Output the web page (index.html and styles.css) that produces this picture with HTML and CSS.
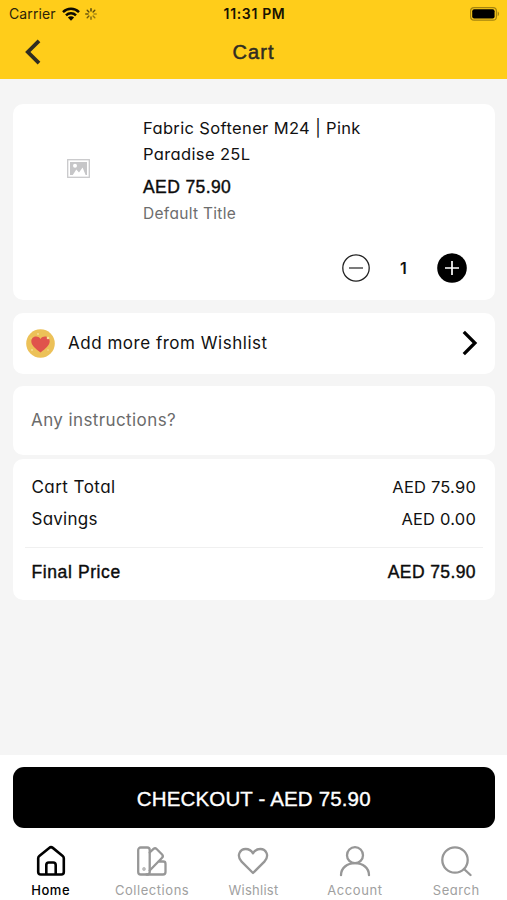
FILE: index.html
```html
<!DOCTYPE html>
<html lang="en">
<head>
<meta charset="utf-8">
<meta name="viewport" content="width=device-width, initial-scale=1">
<title>Cart</title>
<link rel="stylesheet" href="styles.css">
</head>
<body>
<div class="app">
  <header class="top">
    <div class="status">
      <div class="status-left">
        <span class="carrier">Carrier</span>
        <svg class="wifi" width="18" height="14" viewBox="0 0 18 14"><g fill="none" stroke="#0d0b02" stroke-width="2.5"><path d="M1 5.1a11.4 11.4 0 0 1 16 0"/><path d="M4 8.3a7.1 7.1 0 0 1 10 0"/></g><path d="M9 13.7 5.9 10.6a4.4 4.4 0 0 1 6.2 0z" fill="#0d0b02"/></svg>
        <svg class="spinner" width="12" height="12" viewBox="0 0 12 12" stroke="#4a3d0c" stroke-width="1.4" stroke-linecap="round"><path d="M6 .7v2.4"/><path d="M9.8 2.2 8.1 3.9" opacity=".9"/><path d="M11.3 6H8.9" opacity=".45"/><path d="M9.8 9.8 8.1 8.1" opacity=".6"/><path d="M6 11.3V8.9" opacity=".7"/><path d="M2.2 9.8l1.7-1.7" opacity=".8"/><path d="M.7 6h2.4" opacity=".8"/><path d="M2.2 2.2l1.7 1.7" opacity=".9"/></svg>
      </div>
      <span class="clock">11:31 PM</span>
      <div class="status-right">
        <svg width="30" height="14" viewBox="0 0 30 14"><rect x=".6" y=".6" width="25.8" height="12.6" rx="3.5" fill="none" stroke="#a5840f" stroke-width="1.2"/><rect x="2.2" y="2.2" width="22.4" height="9.4" rx="2" fill="#000"/><path d="M27.7 4.6v4.6c1.8-.7 1.8-3.9 0-4.6z" fill="#a5840f"/></svg>
      </div>
    </div>
    <div class="titlebar">
      <svg class="back" width="16" height="26" viewBox="0 0 16 26"><path d="M14 1.8 2.8 13 14 24.2" fill="none" stroke="#302d22" stroke-width="3.8"/></svg>
      <h1>Cart</h1>
    </div>
  </header>

  <main>
    <section class="card product">
      <div class="thumb">
        <svg width="23" height="19" viewBox="0 0 23 19"><rect x=".7" y=".7" width="21.6" height="17.6" fill="#fff" stroke="#c9c9cb" stroke-width="1.3"/><path d="M3 3h17v13H3z" fill="#c6c6c8"/><path d="M5.800 16 9.300 10.500 12 13.400 15.600 8.500 18.600 16z" fill="#fff"/><circle cx="8" cy="6.700" r="2" fill="#fff"/></svg>
      </div>
      <div class="details">
        <p class="geo name">Fabric Softener M24 | Pink<br>Paradise 25L</p>
        <p class="strong price">AED 75.90</p>
        <p class="geo variant">Default Title</p>
        <div class="stepper">
          <svg width="30" height="30" viewBox="0 0 30 30"><circle cx="15" cy="15" r="13.200" fill="#fff" stroke="#222" stroke-width="1.300"/><path d="M8 15h14" stroke="#333" stroke-width="1.300"/></svg>
          <span class="qty">1</span>
          <svg width="30" height="30" viewBox="0 0 30 30"><circle cx="15" cy="15" r="14.800"/><path d="M8 15h14M15 8v14" stroke="#fff" stroke-width="1.700"/></svg>
        </div>
      </div>
    </section>

    <section class="card wishlist">
      <svg width="29" height="29" viewBox="0 0 29 29"><circle cx="14.500" cy="14.500" r="14.300" fill="#ecc158"/><path d="M14.500 23.600C9.500 19.500 5.300 16.500 5.300 12.300c0-5.200 6.500-6.500 9.200-2.400 2.700-4.100 9.200-2.800 9.200 2.400 0 4.200-4.200 7.200-9.200 11.300z" fill="#e0534c"/><g fill="#f7df98"><circle cx="12" cy="5" r=".9"/><circle cx="22" cy="9" r="1.300"/><circle cx="6" cy="21" r=".9"/><circle cx="22" cy="21" r=".8"/><circle cx="5" cy="9" r=".6"/></g></svg>
      <span class="geo wish-text">Add more from Wishlist</span>
      <svg class="next" width="16" height="26" viewBox="0 0 16 26"><path d="M1.800 1.900 12.900 13 1.800 24.100" fill="none" stroke="#000" stroke-width="3.300"/></svg>
    </section>

    <section class="card note"><span class="geo note-text">Any instructions?</span></section>

    <section class="card totals">
      <div class="row"><span class="geo t-cart">Cart Total</span><span class="geo amount">AED 75.90</span></div>
      <div class="row"><span class="geo t-save">Savings</span><span class="geo amount">AED 0.00</span></div>
      <div class="row final"><span class="strong final-label">Final Price</span><span class="strong final-amount">AED 75.90</span></div>
    </section>
  </main>

  <footer>
    <div class="checkout"><span>CHECKOUT - AED 75.90</span></div>
    <nav>
      <div class="tab active">
        <svg viewBox="0 0 32 32"><path d="M3.200 13.200Q3.200 11.800 4.300 10.900L14.200 2.900q1.800-1.400 3.600 0l9.900 8q1.100.9 1.100 2.300V27q0 2.500-2.500 2.500H5.700Q3.200 29.500 3.200 27zM11.300 29.500v-9.500q0-2.500 2.500-2.500h4.400q2.500 0 2.500 2.500v9.500"/></svg>
        <span>Home</span>
      </div>
      <div class="tab">
        <svg viewBox="0 0 32 32"><rect x="2.200" y="2.500" width="11.500" height="27" rx="2.500"/><path d="m13.700 7.500 3.800-3.600q1.600-1.400 3.100.1l5.500 5.500q1.500 1.700 0 3.200L13.700 25.500M22.500 16.500h4.700q2.300 0 2.300 2.300v8.200q0 2.500-2.500 2.500H10.500"/><circle cx="8" cy="24" r=".5"/></svg>
        <span>Collections</span>
      </div>
      <div class="tab">
        <svg viewBox="0 0 32 32"><path d="M16 28 4.600 16.600C-.8 11 2.800 4 8.700 4c3.300 0 5.800 1.800 7.300 4.300C17.500 5.800 20 4 23.300 4c5.900 0 9.500 7 4.100 12.600z"/></svg>
        <span class="t-wish">Wishlist</span>
      </div>
      <div class="tab">
        <svg viewBox="0 0 32 32"><circle cx="16" cy="10.200" r="8"/><path d="M2 30.200c0-7.200 6-12 14-12s14 4.800 14 12"/></svg>
        <span>Account</span>
      </div>
      <div class="tab">
        <svg viewBox="0 0 32 32"><circle cx="15" cy="15" r="12.700"/><path d="m24 24 6.500 6"/></svg>
        <span>Search</span>
      </div>
    </nav>
  </footer>
</div>
</body>
</html>
```
FILE: styles.css
```css
* { box-sizing: border-box; margin: 0; padding: 0; }
body { background: #f5f5f5; font-family: "Liberation Sans", Arial, sans-serif; color: #111; }
svg { display: block; flex: none; }
.app { width: 507px; height: 900px; display: flex; flex-direction: column; overflow: hidden; }

.geo { font-family: Inter, sans-serif; font-feature-settings: "cv11"; font-size: 16.5px; white-space: nowrap; }
.strong { font-size: 17.5px; letter-spacing: 0.4px; -webkit-text-stroke: 0.4px currentColor; color: #0c0c0c; white-space: nowrap; }

.top { height: 79px; background: #ffcd1a; flex: none; }
.status { display: grid; grid-template-columns: 1fr auto 1fr; height: 27px; align-items: center; padding: 0 7px 0 9px; font-family: Inter, sans-serif; }
.status-left { display: flex; align-items: center; }
.carrier { font-size: 14px; line-height: 18px; letter-spacing: 0.1px; color: #2c2409; width: 53px; }
.wifi { margin-right: 5px; }
.clock { font-size: 14px; line-height: 18px; font-weight: 600; color: #171202; letter-spacing: 0.65px; }
.status-right { display: flex; justify-content: flex-end; }
.titlebar { display: grid; grid-template-columns: 1fr auto 1fr; align-items: center; height: 50px; padding-left: 25px; padding-right: 25px; }
h1 { font-size: 20px; font-weight: 400; line-height: 24px; color: #302d22; -webkit-text-stroke: 0.5px currentColor; letter-spacing: 1.1px; }

main { flex: 1; padding: 25px 12.5px 0 13px; display: flex; flex-direction: column; }
.card { background: #fff; border-radius: 10px; flex: none; }
.product { height: 196px; display: flex; }
.thumb { width: 130px; height: 129px; display: flex; align-items: center; justify-content: center; }
.details { flex: 1; padding-top: 11px; padding-right: 28px; }
.name { line-height: 26px; letter-spacing: 0.36px; }
.price { line-height: 22px; margin-top: 9px; }
.variant { line-height: 24px; margin-top: 4px; color: #6d6d6d; font-size: 15.5px; letter-spacing: 0.3px; }
.stepper { display: flex; align-items: center; justify-content: flex-end; margin-top: 27px; }
.qty { width: 66px; text-align: center; font-size: 16px; font-weight: 600; font-family: Inter, sans-serif; }
.wishlist { height: 61px; margin-top: 13px; display: flex; align-items: center; padding: 0 17px 1px 13px; }
.wish-text { margin-left: 13px; flex: 1; font-size: 17px; letter-spacing: 0.52px; }
.note { height: 69px; margin-top: 12px; display: flex; align-items: center; padding: 0 18px 2px; }
.note-text { color: #6b6b6b; font-size: 17px; letter-spacing: 0.4px; }
.totals { height: 141px; margin-top: 4px; padding: 12px 11.500px 0; }
.row { display: flex; justify-content: space-between; align-items: center; height: 32px; padding: 0 7px; }
.t-cart { font-size: 17px; letter-spacing: 0.45px; }
.t-save { font-size: 17px; letter-spacing: 0.25px; }
.amount { letter-spacing: 0.2px; }
.final { border-top: 1px solid #f0f0f0; margin-top: 12px; height: 50px; }
.final-label { letter-spacing: 0.6px; }

footer { height: 145px; background: #fff; flex: none; padding-top: 12px; }
.checkout { height: 61px; margin: 0 12.500px 0 13px; border-radius: 11px; background: #000; color: #fff; display: flex; align-items: center; justify-content: center; font-size: 20.5px; letter-spacing: 0.15px; padding-top: 2px; -webkit-text-stroke: 0.35px #fff; }
nav { display: grid; grid-template-columns: repeat(5, 1fr); padding: 17px 0 0; }
.tab { display: flex; flex-direction: column; align-items: center; color: #a0a0a0; font-family: Inter, sans-serif; font-feature-settings: "cv11"; font-size: 13px; letter-spacing: 0.55px; line-height: 16px; }
.t-wish { letter-spacing: 0.25px; }
.tab svg { width: 32px; height: 32px; margin-bottom: 5px; fill: none; stroke: #979797; stroke-width: 2.300; stroke-linecap: round; stroke-linejoin: round; }
.tab.active { color: #000; font-weight: 500; }
.tab.active svg { stroke: #000; stroke-width: 2.600; }
```
